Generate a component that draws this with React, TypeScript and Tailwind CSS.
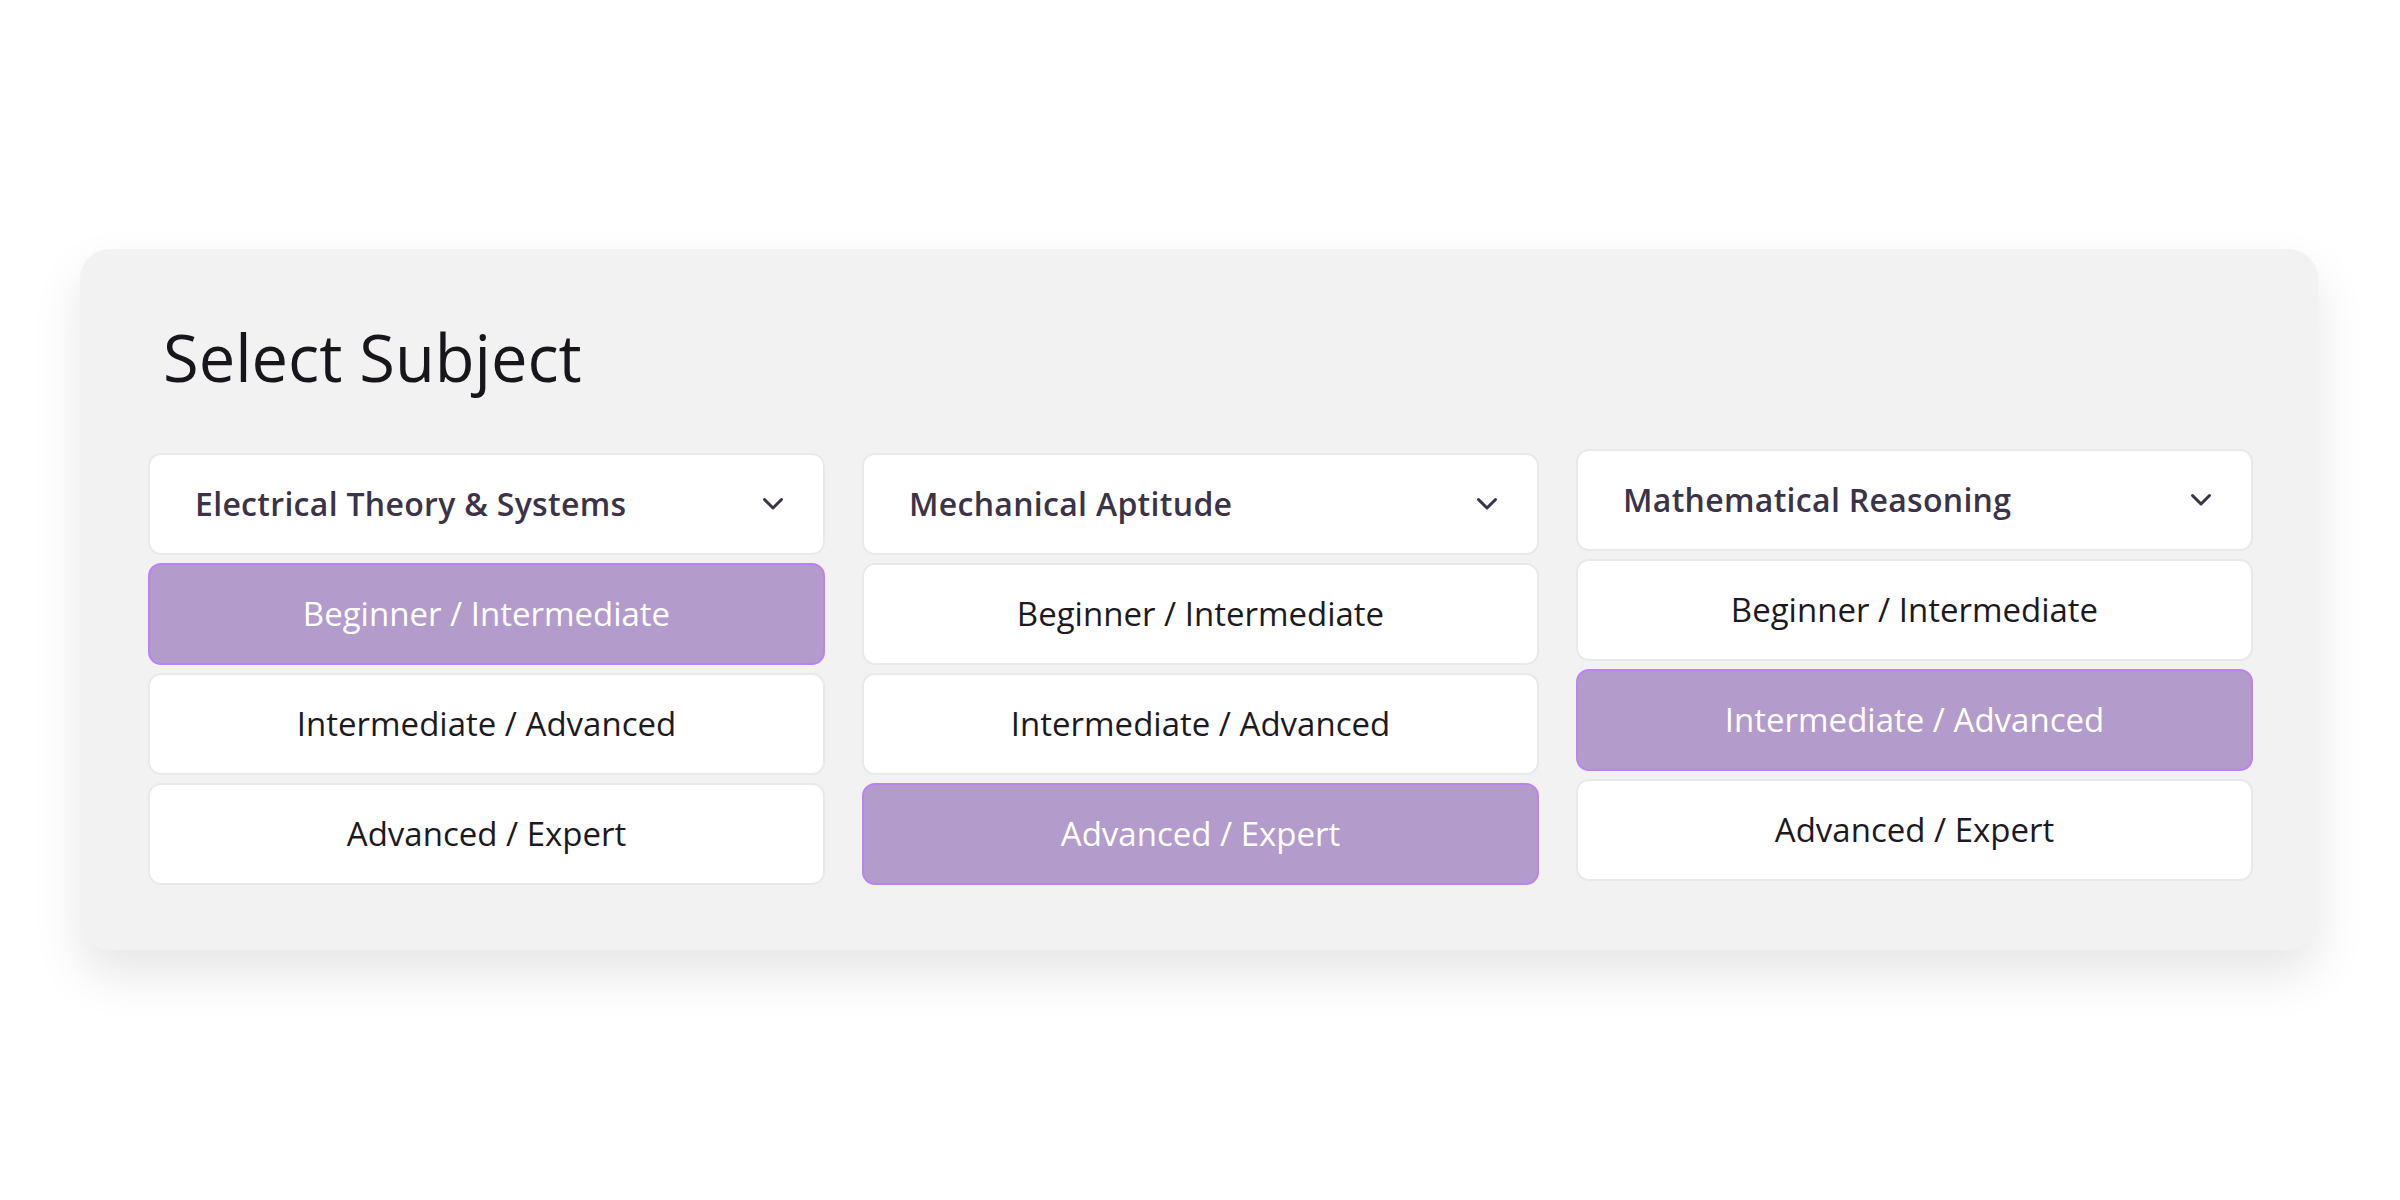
import React from "react";

const columns = [
  { title: "Electrical Theory & Systems", selected: 0, shift: false },
  { title: "Mechanical Aptitude", selected: 2, shift: false },
  { title: "Mathematical Reasoning", selected: 1, shift: true },
];

const levels = ["Beginner / Intermediate", "Intermediate / Advanced", "Advanced / Expert"];

function Chevron() {
  return (
    <svg width="22" height="14" viewBox="0 0 22 14" fill="none">
      <path d="M2.5 2.5 L11 11 L19.5 2.5" stroke="#3b3347" strokeWidth="3" strokeLinecap="round" strokeLinejoin="round" />
    </svg>
  );
}

export default function App() {
  return (
    <div className="w-[2400px] h-[1200px] bg-white flex items-start pt-[249px] pl-[80px]" style={{ fontFamily: '"Open Sans", "Noto Sans", sans-serif' }}>
      <div className="w-[2238px] h-[701px] bg-[#f2f2f2] rounded-[30px] shadow-[0_24px_50px_rgba(0,0,0,0.1)] pl-[68px] pr-[65px] pt-[64px]">
        <h1 className="text-[65px] leading-[88px] text-[#18151b] pl-[15px] font-normal">Select Subject</h1>
        <div className="grid grid-cols-3 gap-[37px] mt-[52px]">
          {columns.map((col) => (
            <div key={col.title} className={`flex flex-col gap-[8px] ${col.shift ? "-mt-[4px]" : ""}`}>
              <div className="h-[102px] bg-white rounded-[13px] border-2 border-[#e9e9e9] flex items-center justify-between pl-[45px] pr-[39px]">
                <span className="text-[32px] font-semibold tracking-[0.3px] text-[#3b3347]">{col.title}</span>
                <Chevron />
              </div>
              {levels.map((lv, i) =>
                i === col.selected ? (
                  <div key={lv} className="h-[102px] bg-[#b39bcb] rounded-[13px] border-2 border-[#bb82f4] flex items-center justify-center">
                    <span className="text-[33px] text-white">{lv}</span>
                  </div>
                ) : (
                  <div key={lv} className="h-[102px] bg-white rounded-[13px] border-2 border-[#e9e9e9] flex items-center justify-center">
                    <span className="text-[33px] text-[#1c1a1f]">{lv}</span>
                  </div>
                )
              )}
            </div>
          ))}
        </div>
      </div>
    </div>
  );
}
